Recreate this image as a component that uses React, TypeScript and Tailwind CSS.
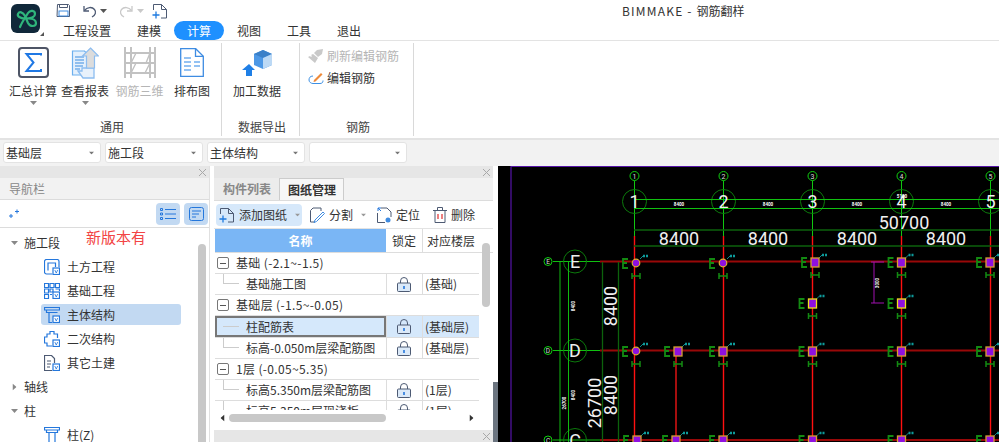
import { ReactNode } from "react";

function Caret({ className = "" }: { className?: string }) {
  return (
    <svg width="7" height="4" viewBox="0 0 7 4" className={className}>
      <path d="M0 0h7L3.500 4z" fill="currentColor" />
    </svg>
  );
}

function Logo() {
  return (
    <div className="relative w-[29px] h-[29px]">
      <svg width="29" height="29" viewBox="0 0 29 29">
        <rect width="29" height="29" rx="6" fill="#10283a" />
        <path
          d="M9 23C11 18 14 14 17 9C19 6 24 6 24 10C24 14 18 14.500 14 14.500C9 14.500 6 12 7 10C8 7 12 8 14 12L17 19C19 23 25 23 25 19C25 15 20 14.500 17 14.500"
          fill="none"
          stroke="#2fb67c"
          strokeWidth="2.200"
          strokeLinecap="round"
        />
      </svg>
      <span className="absolute right-[-4px] bottom-[-3px] w-0 h-0 border-l-[4px] border-l-transparent border-b-[4px] border-b-[#555]" />
    </div>
  );
}

function SaveIcon() {
  return (
    <svg width="15" height="15" viewBox="0 0 15 15" fill="none" stroke="#4d5a73" strokeWidth="1">
      <path d="M1.500 1.500h11l1 1v11h-12.500z" />
      <path d="M3.500 1.500v3h8v-3" />
      <rect x="3" y="8" width="9" height="5" stroke="#3f8be0" />
    </svg>
  );
}

function UndoIcon({ color }: { color: string }) {
  return (
    <svg width="14" height="14" viewBox="0 0 14 14" fill="none" stroke={color} strokeWidth="1.300">
      <path d="M1 2v5h5" />
      <path d="M1.500 6.500C4 3 9 2.500 11.500 5.500c2 2.500 1 5.500-2.500 7.500" />
    </svg>
  );
}

function AddSheetIcon() {
  return (
    <svg width="16" height="16" viewBox="0 0 16 16" fill="none" stroke="#4d5a73" strokeWidth="1">
      <path d="M1.500 7V1.500h8l5 5V15H9M14.500 11v1" />
      <path d="M9.500 1.500v5h5" />
      <path d="M.5 12h7M4 8.500v7" stroke="#1f7be0" strokeWidth="1.300" />
    </svg>
  );
}

function SigmaIcon() {
  return (
    <svg width="31" height="31" viewBox="0 0 31 31" fill="none">
      <rect x="1" y="1" width="29" height="29" rx="3" stroke="#4e5566" strokeWidth="2" />
      <path d="M23 8.500V7H8.500l7 8.500-7 8.500H23v-2" stroke="#1f78e4" strokeWidth="2" />
    </svg>
  );
}

function ReportIcon() {
  return (
    <svg width="28" height="32" viewBox="0 0 28 32" fill="none">
      <path d="M1.500 4h12l3 3v21h-15z" fill="#e4f0fc" stroke="#6db0ee" strokeWidth="1.200" />
      <path d="M4 10h9M4 13h9M4 16h9M4 19h8M4 22h5" stroke="#3d8de0" />
      <path d="M7 24l5 7h11V21H11v3z" fill="#e8f1fb" stroke="#8dbdf0" strokeWidth="1.300" />
      <path d="M19.500 1l8 8h-4v12h-8V9h-4z" fill="#dcdcdc" stroke="#8dbdf0" strokeWidth="1.200" />
    </svg>
  );
}

function Rebar3dIcon() {
  return (
    <svg width="32" height="31" viewBox="0 0 32 31" fill="none" stroke="#c2c2c2" strokeWidth="2">
      <path d="M1 0v31M7 0v31M26 0v31M31 0v31" />
      <path d="M1 6h30M1 16h30M1 26h30" strokeWidth="1.800" />
      <path d="M7 16l5-10M7 26l5-10M26 16l-5 10M26 6l-4 10" strokeWidth="1.400" />
    </svg>
  );
}

function LayoutIcon() {
  return (
    <svg width="24" height="29" viewBox="0 0 24 29" fill="none" stroke="#3e8ce2" strokeWidth="1.300">
      <path d="M.7.700h15l7.600 7.600v20H.7z" />
      <path d="M15.500.700v7.600h7.800" />
      <path d="M4 10h7M4 14h7M14 14h6M4 18h7M14 18h6M4 22h7" strokeWidth="1.600" stroke="#72aef0" />
    </svg>
  );
}

function CubeIcon() {
  return (
    <svg width="30" height="27" viewBox="0 0 30 27" fill="none">
      <path d="M0 21l7-6 6 6h-3v6H4v-6z" fill="#1f7fe6" />
      <path d="M21 1l9 4v11l-9 4-9-4V5z" fill="#4d98e6" />
      <path d="M12 5l9 4 9-4-9-4z" fill="#3a80c8" />
      <path d="M21 9v11l9-4V5z" fill="#bcd9f5" />
    </svg>
  );
}

function BrushIcon() {
  return (
    <svg width="16" height="14" viewBox="0 0 16 14" fill="#c9c9c9">
      <path d="M9 1l6-1-1 5-4 3-4-4z" />
      <path d="M5 5l5 4-3 5-7-6 2-1 1 1 1-1-1-1z" />
    </svg>
  );
}

function EditRebarIcon() {
  return (
    <svg width="16" height="13" viewBox="0 0 16 13" fill="none">
      <path d="M5 4C2 4 1 6 1 8s2 3.500 4 3.500h7c2 0 3-1 3-3" stroke="#3d90e4" />
      <path d="M6 8l7-7 1.500 1.500-7 7-2 .5z" fill="#ee8a3a" />
    </svg>
  );
}

function RibbonButton({ icon, label, w, disabled, caret }: { icon: ReactNode; label: string; w: string; disabled?: boolean; caret?: boolean }) {
  return (
    <div className={`${w} flex flex-col items-center pt-[3px]`}>
      <div className="h-[33px] flex items-center justify-center">{icon}</div>
      <span className={`mt-[3px] text-[12px] leading-[18px] whitespace-nowrap ${disabled ? "text-[#b5b5b5]" : "text-[#333]"}`}>{label}</span>
      {caret && <Caret className="text-[#888] mt-[1px]" />}
    </div>
  );
}

function RibbonGroup({ title, w, children }: { title: string; w: string; children: ReactNode }) {
  return (
    <div className={`${w} h-[93px] flex flex-col border-r-[1px] border-[#d9d9d9] shrink-0`}>
      <div className="flex-1 flex">{children}</div>
      <div className="h-[18px] pl-[3px] text-center text-[12px] leading-[18px] text-[#444]">{title}</div>
    </div>
  );
}

function Combo({ label }: { label: string }) {
  return (
    <div className="w-[98px] h-[21px] bg-white rounded-[3px] border border-[#e3e3e3] flex items-center justify-between pl-[2px] pr-[5px] text-[12px] text-[#333]">
      <span>{label}</span>
      <Caret className="text-[#777] scale-75" />
    </div>
  );
}

function CloseStrip() {
  return (
    <div className="h-[12px] bg-[#e6e6e6] flex items-center justify-end pr-[3px] text-[#a8a8a8] shrink-0">
      <svg width="7" height="7" viewBox="0 0 7 7" stroke="currentColor"><path d="M0 0l7 7M7 0L0 7" /></svg>
    </div>
  );
}

function TreeIcon({ kind }: { kind: string }) {
  const c = kind === "other" ? "#4d5a73" : "#2477dc";
  return (
    <svg width="16" height="16" viewBox="0 0 16 16" fill="none" stroke={c} strokeWidth="1.200">
      {kind === "earth" && <path d="M8 15H2.500a2 2 0 0 1-2-2V2.500a2 2 0 0 1 2-2H13a2 2 0 0 1 2 2V8M4 11.500V4h7.500v4" />}
      {kind === "found" && <path d="M.5.500h4v4h-4zM6 .500h4v4H6zM11.500.500h4v4h-4zM.5 6h4v4h-4zM.5 11.500h4v4h-4zM6 6h3v3H6zM6 11.500h2M11.500 6h4v2" />}
      {kind === "main" && <path d="M.5.500h15v2.500H.5zM2.500 3v2.500h11M5 5.500V15.500h3" />}
      {kind === "second" && <path d="M8 15H3v-3H.5V6H3V3h3V.5h4V3h3.500v4M5 5" />}
      {kind === "other" && <path d="M8 15.500H.5V.5h7l3 3V8M3 6h4M3 9h4M3 12h3" />}
      {kind !== "col" && <rect x="9" y="9" width="6.500" height="6.500" fill="white" stroke="#2477dc" />}
      {kind !== "col" && <path d="M10.800 11l1.450 3 1.450-3" strokeWidth=".8" stroke="#2477dc" />}
      {kind === "col" && <path d="M.5.500h15v2.500H.5zM2.500 3v2.500h11V3M5 5.500v10h6v-10" />}
    </svg>
  );
}

function Parent({ label, open }: { label: string; open?: boolean }) {
  return (
    <div className="h-[24px] flex items-center pl-[11px] text-[12px] text-[#333]">
      <span className="w-[13px] flex text-[#888]">
        {open ? <Caret /> : <Caret className="-rotate-90" />}
      </span>
      {label}
    </div>
  );
}

function Child({ label, kind, active }: { label: string; kind: string; active?: boolean }) {
  return (
    <div className={`h-[24px] ml-[41px] w-[140px] flex items-center pl-[3px] gap-[7px] text-[12px] text-[#333] ${active ? "relative" : ""}`}>
      {active && <span className="absolute inset-x-0 top-[1px] bottom-[2px] bg-[#c2d9f2] rounded-[3px]" />}
      <span className="relative flex"><TreeIcon kind={kind} /></span>
      <span className="relative">{label}</span>
    </div>
  );
}

function NavPanel() {
  return (
    <div className="relative w-[210px] h-full flex flex-col border-r-[1px] border-[#e0e0e0] bg-white">
      <CloseStrip />
      <div className="h-[22px] bg-[#f2f2f2] border-b border-[#dcdcdc] flex items-center pl-[9px] text-[12px] text-[#888]">导航栏</div>
      <div className="h-[28px] border-b border-[#dcdcdc] flex items-center justify-between pl-[9px] pr-[1px]">
        <svg width="10" height="10" viewBox="0 0 10 10" stroke="#2477dc"><path d="M6 2.500h4M8 .500v4M0 7h4M2 5v4" /></svg>
        <div className="flex gap-[4px]">
          <div className="w-[24px] h-[22px] rounded-[4px] bg-[#c2d9f2] flex items-center justify-center">
            <svg width="16" height="12" viewBox="0 0 16 12" fill="none" stroke="#2477dc"><path d="M5 1.500h11M5 6h11M5 10.500h11M.5.500h2v2h-2zM.5 5h2v2h-2zM.5 9.500h2v2h-2z" /></svg>
          </div>
          <div className="w-[24px] h-[22px] rounded-[4px] bg-[#c2d9f2] flex items-center justify-center">
            <svg width="15" height="14" viewBox="0 0 15 14" fill="none" stroke="#2477dc"><rect x=".5" y=".5" width="14" height="13" rx="2" /><path d="M3 4h9M3 7h7M3 10h4" /></svg>
          </div>
        </div>
      </div>
      <div className="relative flex-1 overflow-hidden pt-[3px]">
        <span className="absolute left-[198px] top-[16px] bottom-[-20px] w-[8px] rounded-[4px] bg-[#c8c8c8]" />
        <Parent label="施工段" open />
        <Child label="土方工程" kind="earth" />
        <Child label="基础工程" kind="found" />
        <Child label="主体结构" kind="main" active />
        <Child label="二次结构" kind="second" />
        <Child label="其它土建" kind="other" />
        <Parent label="轴线" />
        <Parent label="柱" open />
        <Child label="柱(Z)" kind="col" />
      </div>
      <span className="absolute left-[86px] top-[63px] text-[15px] leading-[15px] text-[#f24444]">新版本有</span>
    </div>
  );
}

function LockIcon() {
  return (
    <svg width="14" height="15" viewBox="0 0 14 15" fill="none" stroke="#4d5a73">
      <path d="M3.500 6V4a3.500 3.500 0 0 1 7 0v2" />
      <rect x=".5" y="6" width="13" height="8.500" rx="1" fill="#dbe9f8" />
      <path d="M7 9v3" stroke="#2477dc" strokeWidth="1.600" />
    </svg>
  );
}

function GroupRow({ label }: { label: string }) {
  return (
    <div className="h-[21px] flex items-center border-b border-[#ddd] text-[12px] text-[#333] pl-[2px] gap-[7px] whitespace-nowrap tracking-[0.35px]">
      <span className="w-[12px] h-[12px] border border-[#777] rounded-[2px] flex items-center justify-center">
        <span className="w-[6px] h-[1px] bg-[#555]" />
      </span>
      {label}
    </div>
  );
}

function SheetRow({ name, floor, selected }: { name: string; floor: string; selected?: boolean }) {
  return (
    <div className={`${selected ? "h-[22px] bg-[#d5e8fb]" : "h-[21px]"} grid grid-cols-[171px_36px_57px] text-[12px] text-[#333] border-b border-[#ddd]`}>
      <div className={`relative flex items-center whitespace-nowrap overflow-hidden ${selected ? "border-2 border-[#777] pl-[29px]" : "pl-[31px]"}`}>
        {!selected && <span className="absolute left-[8px] top-0 w-[16px] h-[10px] border-l border-b border-[#ccc]" />}
        {selected && <span className="absolute left-[6px] top-[8px] w-[16px] h-[1px] bg-[#ccc]" />}
        {name}
      </div>
      <div className="flex items-center justify-center pr-[2px] border-l border-[#ddd]"><LockIcon /></div>
      <div className="flex items-center pl-[2px] border-l border-[#ddd]">{floor}</div>
    </div>
  );
}

function ToolBtn({ icon, label, caret, active, w }: { icon: ReactNode; label: string; caret?: boolean; active?: boolean; w: string }) {
  return (
    <div className={`${w} h-[22px] flex items-center gap-[4px] pl-[3px] rounded-[4px] text-[12px] text-[#333] shrink-0 ${active ? "bg-[#d6e8fa]" : ""}`}>
      {icon}
      <span className="whitespace-nowrap">{label}</span>
      {caret && <Caret className="ml-[3px] text-[#999] scale-75" />}
    </div>
  );
}

function SheetPanel() {
  return (
    <div className="w-[279px] h-full flex flex-col bg-white">
      <CloseStrip />
      <div className="h-[23px] bg-[#f2f2f2] border-b border-[#dcdcdc] flex text-[12px] font-bold">
        <div className="w-[65px] pl-[1px] flex items-center justify-center text-[#888] bg-[#ececec]">构件列表</div>
        <div className="w-[65px] pl-[1px] flex items-center justify-center text-[#333] border-x-[1px] border-t-[1px] border-[#ccc] bg-[#f7f7f7]">图纸管理</div>
      </div>
      <div className="h-[28px] border-b border-[#e3e3e3] flex items-center pl-[2px]">
        <ToolBtn w="w-[86px]" active caret icon={<AddSheetIcon />} label="添加图纸" />
        <div className="w-[4px] shrink-0" />
        <ToolBtn w="w-[67px]" caret label="分割" icon={
          <svg width="16" height="16" viewBox="0 0 16 16" fill="none" stroke="#4d5a73">
            <path d="M6 15H1.500V3.500L4 1h8v3M1.500 8v2" />
            <path d="M6 13l8-8 1.500 1.500-8 8-2.500 1z" stroke="#3f8be0" />
          </svg>
        } />
        <ToolBtn w="w-[57px]" label="定位" icon={
          <svg width="16" height="16" viewBox="0 0 16 16" fill="none" stroke="#4d5a73">
            <path d="M1.500 6v9.500H9M5 1h6l4 4v5" />
            <circle cx="12" cy="13" r="2.500" fill="#3f8be0" stroke="none" />
            <path d="M2 1l3 3M2 1v3M2 1h3" stroke="#2477dc" />
          </svg>
        } />
        <ToolBtn w="w-[60px]" label="删除" icon={
          <svg width="14" height="16" viewBox="0 0 14 16" fill="none" stroke="#4d5a73">
            <path d="M0 3.500h14M4.500 3V.5h5V3M2 4v11.500h10V4" />
            <path d="M5 7v5M9 7v5" stroke="#e23c3c" strokeWidth="1.300" />
          </svg>
        } />
      </div>
      <div className="relative flex-1 overflow-hidden pl-[1px]">
        <span className="absolute left-[268px] top-[14px] h-[64px] w-[8px] rounded-[4px] bg-[#c8c8c8]" />
        <div className="h-[24px] grid grid-cols-[171px_36px_57px] text-[12px] border-b border-[#ddd]">
          <div className="bg-[#7ab6f5] text-white font-bold flex items-center justify-center">名称</div>
          <div className="flex items-center justify-center text-[#333]">锁定</div>
          <div className="flex items-center justify-center text-[#333] border-l border-[#ddd]">对应楼层</div>
        </div>
        <div className="w-[264px]">
          <GroupRow label="基础 (-2.1~-1.5)" />
          <SheetRow name="基础施工图" floor="(基础)" />
          <GroupRow label="基础层 (-1.5~-0.05)" />
          <SheetRow name="柱配筋表" floor="(基础层)" selected />
          <SheetRow name="标高-0.050m层梁配筋图" floor="(基础层)" />
          <GroupRow label="1层 (-0.05~5.35)" />
          <SheetRow name="标高5.350m层梁配筋图" floor="(1层)" />
          <SheetRow name="标高5.350m层现浇板" floor="(1层)" />
        </div>
        <div className="absolute left-0 right-0 bottom-0 h-[15px] bg-white flex items-center">
          <Caret className="absolute left-[5px] text-[#333] rotate-90" />
          <span className="absolute left-[15px] w-[157px] h-[8px] rounded-[4px] bg-[#c8c8c8]" />
          <Caret className="absolute left-[254px] text-[#333] -rotate-90" />
        </div>
      </div>
    </div>
  );
}

const gridX = [634.5, 723.5, 812.5, 901.5, 990.5];
const colsRound = [[636, 263], [723, 263], [636, 351]];
const colsSquare = [
  [815, 262, 1], [901.5, 262, 0], [990, 262, 0],
  [812.5, 303, 2], [901.5, 303, 2],
  [678, 351, 0], [723, 351, 0], [812.5, 351, 0], [901.5, 351, 0], [990, 351, 0],
  [637, 440, 0], [676, 440, 0], [723, 440, 0], [812.5, 440, 0], [901.5, 440, 0], [990, 440, 0],
];

// rebar callouts around each column
function Marks({ x, y }: { x: number; y: number }) {
  return (
    <g fill="none">
      <path d={`M${x - 8} ${y - 4}h-5v9h5M${x - 13} ${y}h4`} stroke="#138a12" strokeWidth="1.800" />
      <path d={`M${x - 4} ${y + 10}v6M${x + 4} ${y + 10}v6M${x - 4} ${y + 13}h8`} stroke="#138a12" strokeWidth="1.500" />
      <path d={`M${x + 4} ${y - 4}l3-3`} stroke="#0e8a8a" />
      <path d={`M${x + 7} ${y - 7}h5`} stroke="#0e9a9a" strokeWidth="2.500" strokeDasharray="2 1" />
    </g>
  );
}

function CadView() {
  return (
    <svg width="501" height="276" viewBox="498 166 501 276" className="block bg-black">
      <path d="M511 442V166.500H999" fill="none" stroke="#5514a8" strokeWidth="1.200" />
      {/* axis lines */}
      {gridX.map((x, i) => (
        <g key={x} fill="none">
          <path d={`M${x} 181V236`} stroke="#10c810" />
          <path d={`M${x} 236V442`} stroke="#ff1010" strokeWidth="1.400" />
          <circle cx={x} cy="176" r="4.500" stroke="#10d010" />
          <text x={x} y="178.500" textAnchor="middle" fontSize="7" fill="#ddd" stroke="none" fontFamily="Roboto, sans-serif">{i + 1}</text>
          <circle cx={x} cy="201.500" r="12" stroke="#0c7a0c" />
        </g>
      ))}
      <path d="M676 351V442" stroke="#b81010" strokeWidth="1.800" />
      <path d="M634 199.500H999M634 208.500H999" stroke="#10c010" />
      <path d="M634 230H999M634 246H999" stroke="#0c620c" strokeWidth="1.300" />
      {[[261.5, "E"], [350.5, "D"], [440, "C"]].map(([y, label]) => (
        <g key={label as string} fill="none">
          <path d={`M553 ${y}H600`} stroke="#10c010" />
          <path d={`M600 ${y}H999`} stroke="#990808" strokeWidth="2" />
          <circle cx="548" cy={y as number} r="4" stroke="#10d010" />
          <text x="548" y={(y as number) + 2.500} textAnchor="middle" fontSize="6.500" fill="#ddd" stroke="none" fontFamily="Roboto, sans-serif">{label}</text>
          <circle cx="575" cy={y as number} r="11.500" stroke="#0c7a0c" />
          <text x="575" y={(y as number) + 6.500} textAnchor="middle" fontSize="18" fill="#eee" stroke="none" fontFamily="Roboto, sans-serif">{label}</text>
        </g>
      ))}
      <path d="M560 262V442M568.500 262V442" stroke="#10b810" fill="none" />
      <path d="M602.500 262V442M618.500 262V442" stroke="#0c620c" strokeWidth="1.300" fill="none" />
      <path d="M871 262h13M874 262V303M871 303h13" stroke="#a010b0" fill="none" />
      {/* columns */}
      {colsSquare.map(([x, y, t]) => (
        <g key={`${x}-${y}`}>
          <Marks x={x} y={y} />
          <rect x={x - 4} y={y - 4} width="8" height="9" fill="#8f10e0" stroke={t === 2 ? "#f2e21a" : "#d8a030"} strokeWidth="1.300" />
        </g>
      ))}
      {colsRound.map(([x, y]) => (
        <g key={`${x}-${y}`}>
          <Marks x={x} y={y} />
          <circle cx={x} cy={y} r="3.800" fill="#8f10e0" stroke="#e0b030" strokeWidth="1.200" />
        </g>
      ))}
      {/* big dimensions */}
      <g fill="#f0f0f0" fontFamily="Roboto, sans-serif" fontSize="18">
        {gridX.map((x, i) => (
          <text key={x} x={x} y="208" textAnchor="middle">{i + 1}</text>
        ))}
        {[679, 768, 857, 946].map((x) => (
          <text key={x} x={x} y="245" textAnchor="middle">8400</text>
        ))}
        <text x="904" y="229" textAnchor="middle">50700</text>
        <text transform="translate(617 306) rotate(-90)" textAnchor="middle">8400</text>
        <text transform="translate(617 395) rotate(-90)" textAnchor="middle">8400</text>
        <text transform="translate(601 403) rotate(-90)" textAnchor="middle">26700</text>
      </g>
      {/* tiny dimension labels */}
      <g fill="#fff" fontFamily="Roboto, sans-serif" fontSize="4.500" fontWeight="700">
        {[679, 768, 857, 946].map((x) => (
          <text key={x} x={x} y="206" textAnchor="middle">8400</text>
        ))}
        <text x="902" y="198" textAnchor="middle">5100</text>
        <text transform="translate(575 306) rotate(-90)" textAnchor="middle">8400</text>
        <text transform="translate(575 395) rotate(-90)" textAnchor="middle">8400</text>
        <text transform="translate(566 403) rotate(-90)" textAnchor="middle">26700</text>
        <text transform="translate(879 283) rotate(-90)" textAnchor="middle">3000</text>
      </g>
    </svg>
  );
}

export default function App() {
  return (
    <div className="w-[999px] h-[442px] overflow-hidden flex flex-col bg-white font-['Noto_Sans_CJK_SC','Noto_Sans',sans-serif]">
      {/* title bar + tabs */}
      <div className="h-[41px] flex border-b border-[#e3e3e3] shrink-0">
        <div className="w-[50px] pl-[11px] pt-[4px] shrink-0"><Logo /></div>
        <div className="flex-1 flex flex-col">
          <div className="h-[22px] flex items-center">
            <span className="ml-[6px] flex"><SaveIcon /></span>
            <span className="ml-[12px] flex"><UndoIcon color="#4d5a73" /></span>
            <Caret className="ml-[3px] text-[#555]" />
            <span className="ml-[12px] flex -scale-x-100"><UndoIcon color="#c9c9c9" /></span>
            <Caret className="ml-[4px] text-[#c9c9c9]" />
            <span className="ml-[8px] flex"><AddSheetIcon /></span>
            <span className="ml-[454px] text-[12px] text-[#333] whitespace-nowrap"><span className="tracking-[1.200px]">BIMMAKE - </span>钢筋翻样</span>
          </div>
          <div className="h-[19px] flex text-[12px] text-[#333]">
            <div className="w-[74px] flex items-center justify-center">工程设置</div>
            <div className="w-[50px] flex items-center justify-center">建模</div>
            <div className="w-[50px] flex items-center justify-center rounded-full bg-[#1e90ff] text-white">计算</div>
            <div className="w-[50px] flex items-center justify-center">视图</div>
            <div className="w-[50px] flex items-center justify-center">工具</div>
            <div className="w-[50px] flex items-center justify-center">退出</div>
          </div>
        </div>
      </div>

      {/* ribbon */}
      <div className="h-[97px] flex items-start pt-[2px] shrink-0">
        <RibbonGroup title="通用" w="w-[222px]">
          <div className="w-[7px]" />
          <RibbonButton w="w-[52px]" icon={<SigmaIcon />} label="汇总计算" caret />
          <RibbonButton w="w-[52px]" icon={<ReportIcon />} label="查看报表" caret />
          <RibbonButton w="w-[57px]" icon={<Rebar3dIcon />} label="钢筋三维" disabled />
          <RibbonButton w="w-[48px]" icon={<LayoutIcon />} label="排布图" />
        </RibbonGroup>
        <RibbonGroup title="数据导出" w="w-[78px]">
          <RibbonButton w="w-[70px]" icon={<CubeIcon />} label="加工数据" />
        </RibbonGroup>
        <RibbonGroup title="钢筋" w="w-[114px]">
          <div className="pl-[8px] pt-[4px] flex flex-col gap-[4px] text-[12px]">
            <div className="h-[18px] flex items-center gap-[3px] text-[#b5b5b5]"><BrushIcon />刷新编辑钢筋</div>
            <div className="h-[18px] flex items-center gap-[3px] text-[#333]"><EditRebarIcon />编辑钢筋</div>
          </div>
        </RibbonGroup>
      </div>

      {/* combo row */}
      <div className="h-[28px] bg-[#f2f2f2] border-t-2 border-[#e3e3e3] flex items-start pt-[2px] pl-[3px] gap-[4px] shrink-0">
        <Combo label="基础层" />
        <Combo label="施工段" />
        <Combo label="主体结构" />
        <Combo label="" />
      </div>

      {/* workspace */}
      <div className="flex-1 min-h-0 flex bg-[#f2f2f2]">
        <NavPanel />
        <div className="w-[4px] bg-white" />
        <div className="w-[279px] h-full flex flex-col">
          <div className="h-[262px]"><SheetPanel /></div>
          <div className="h-[5px] bg-white" />
          <CloseStrip />
        </div>
        <div className="w-[5px] h-full flex flex-col bg-white">
          <div className="h-[216px]" />
          <div className="flex-1 bg-[#6c7580]" />
        </div>
        <CadView />
      </div>
    </div>
  );
}
